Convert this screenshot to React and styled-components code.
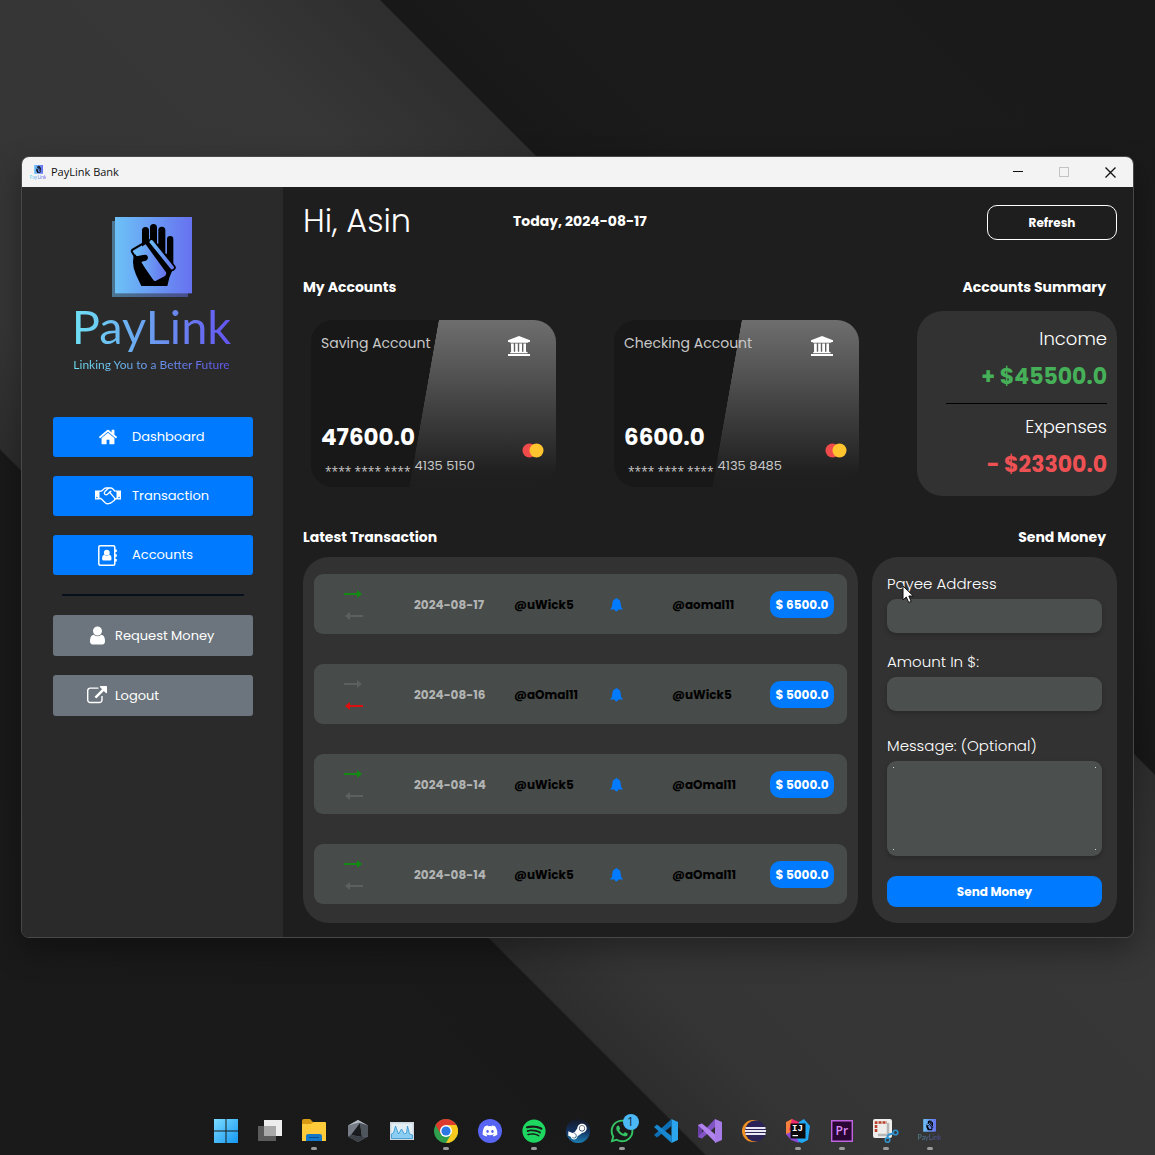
import React from "react";
import styled, { createGlobalStyle, css } from "styled-components";
import { FaDiscord, FaSpotify, FaSteamSymbol, FaWhatsapp } from "react-icons/fa";

const ui = `Poppins, Inter, "Noto Sans", sans-serif`;
const blue = "#007bff";

const GlobalStyle = createGlobalStyle`
  *, *::before, *::after { box-sizing: border-box; }
  body { margin: 0; background: #1a1a1a; font-family: ${ui}; color: #fff; }
  button, input, textarea { font: inherit; color: inherit; }
  h1, h2, p { margin: 0; }
  svg { display: block; flex: none; }
`;

const Desktop = styled.div`
  min-height: 100vh;
  display: flex;
  flex-direction: column;
  padding: 156px 21px 0;
  background: linear-gradient(
    45deg,
    #1a1a1a 0%,
    #191919 30.5%,
    #2d2d2d 30.6%,
    #353535 36%,
    #373737 58%,
    #2e2e2e 66.4%,
    #181818 66.5%,
    #1b1b1b 74%,
    #1a1a1a 100%
  );
`;

const Window = styled.div`
  display: flex;
  flex-direction: column;
  border: 1px solid #484848;
  border-radius: 8px;
  overflow: hidden;
  box-shadow: 0 12px 30px rgba(0, 0, 0, 0.35);
`;

const TitleBar = styled.div`
  display: flex;
  align-items: center;
  height: 30px;
  padding-left: 8px;
  gap: 5px;
  background: #f3f3f3;
  color: #111;
  font: 11px/16px "Open Sans", sans-serif;
`;

const WindowControls = styled.div`
  display: flex;
  margin-left: auto;
  height: 100%;
`;

const ControlButton = styled.button`
  width: 46px;
  padding: 0;
  border: 0;
  background: none;
  display: grid;
  place-items: center;
`;

const Body = styled.div`
  display: grid;
  grid-template-columns: 261px 1fr;
`;

const Sidebar = styled.aside`
  display: flex;
  flex-direction: column;
  padding: 30px 30px 20px 31px;
  background: #2a2a2a;
`;

const Brand = styled.div`
  display: flex;
  flex-direction: column;
  align-items: center;
  margin-bottom: 42px;
  padding-right: 3px;
`;

const gradientText = css`
  background: linear-gradient(90deg, #6ee2f5, #6b9cf0 50%, #6454f0);
  -webkit-background-clip: text;
  background-clip: text;
  color: transparent;
`;

const BrandName = styled.p`
  ${gradientText}
  font: 47px/58px Lato, sans-serif;
`;

const Tagline = styled.p`
  ${gradientText}
  font: 12px/20px Lato, sans-serif;
`;

const Nav = styled.nav`
  display: flex;
  flex-direction: column;
  gap: 19px;
`;

const NavButton = styled.button`
  display: flex;
  align-items: center;
  height: ${(p) => (p.$muted ? 41 : 40)}px;
  padding: 0 0 0 ${(p) => (p.$muted ? 29 : 40)}px;
  gap: ${(p) => (p.$muted ? 3 : 9)}px;
  border: 0;
  border-radius: 3px;
  background: ${(p) => (p.$muted ? "#6c757d" : blue)};
  font-size: 13px;
  font-weight: 400;
`;

const NavIcon = styled.span`
  width: 30px;
  display: flex;
  justify-content: center;
`;

const Divider = styled.hr`
  width: 182px;
  height: 2px;
  margin: 0 auto;
  border: 0;
  background: #06101c;
`;

const Main = styled.main`
  display: flex;
  flex-direction: column;
  padding: 18px 16px 14px 20px;
  background: #1e1e1e;
`;

const Header = styled.header`
  display: grid;
  grid-template-columns: 210px 1fr 130px;
  height: 35px;
  margin-bottom: 35px;
`;

const Greeting = styled.h1`
  font-size: 32px;
  line-height: 32px;
  font-weight: 300;
`;

const Today = styled.p`
  font-size: 14px;
  line-height: 32px;
  font-weight: 700;
`;

const RefreshButton = styled.button`
  height: 35px;
  border: 1px solid #fff;
  border-radius: 10px;
  background: transparent;
  font-size: 12px;
  font-weight: 700;
`;

const TopSection = styled.div`
  display: grid;
  grid-template-columns: 1fr 200px;
  column-gap: 58px;
  margin-bottom: 29px;
`;

const BottomSection = styled.div`
  display: grid;
  grid-template-columns: 1fr 245px;
  column-gap: 14px;
`;

const Column = styled.section`
  display: flex;
  flex-direction: column;
  gap: ${(p) => p.$gap}px;
`;

const SectionTitle = styled.h2`
  font-size: 14px;
  line-height: 24px;
  font-weight: 700;
  text-align: ${(p) => (p.$right ? "right" : "left")};
  padding-right: ${(p) => (p.$right ? 11 : 0)}px;
`;

const Cards = styled.div`
  display: grid;
  grid-template-columns: 1fr 1fr;
  gap: 58px;
  padding: 9px 0 0 8px;
`;

const BankCard = styled.article`
  display: flex;
  flex-direction: column;
  justify-content: space-between;
  height: 167px;
  padding: 12px 12px 11px 10px;
  border-radius: 22px;
  background: linear-gradient(100deg, #181818 46.5%, transparent 46.7%),
    linear-gradient(#6e6e6e, #4c4c4c 40%, #1f1f1f 92%, #1e1e1e);
`;

const CardRow = styled.div`
  display: flex;
  justify-content: space-between;
  align-items: ${(p) => (p.$center ? "center" : "flex-start")};
`;

const AccountType = styled.p`
  font-size: 14px;
  line-height: 22px;
  font-weight: 400;
  color: #c8c8c8;
`;

const BankIconBox = styled.span`
  padding: 4px 14px 0 0;
`;

const Balance = styled.p`
  font-size: 23px;
  line-height: 28px;
  font-weight: 700;
  margin-bottom: 5px;
`;

const CardNumber = styled.p`
  display: flex;
  align-items: flex-end;
  gap: 4px;
  padding-left: 4px;
  font-size: 13px;
  line-height: 20px;
  font-weight: 400;
  color: #c8c8c8;
`;

const Mask = styled.span`
  font: 12px/9px "Open Sans", sans-serif;
`;

const SummaryPanel = styled.div`
  display: flex;
  flex-direction: column;
  gap: 11px;
  padding: 16px 10px 16px 29px;
  border-radius: 26px;
  background: #323232;
  text-align: right;
`;

const SummaryLabel = styled.p`
  font-size: 18px;
  line-height: 24px;
  font-weight: 300;
`;

const SummaryAmount = styled.p`
  font-size: 22px;
  line-height: 30px;
  font-weight: 700;
  color: ${(p) => (p.$income ? "#46b058" : "#ee5153")};
`;

const SummaryRule = styled.hr`
  width: 100%;
  height: 1px;
  margin: 0;
  border: 0;
  background: #000;
`;

const TransactionPanel = styled.ul`
  display: flex;
  flex-direction: column;
  gap: 30px;
  margin: 0;
  padding: 17px 11px 19px;
  border-radius: 26px;
  background: #323232;
  list-style: none;
`;

const Transaction = styled.li`
  display: grid;
  grid-template-columns: 70fr 100fr 96fr 62fr 98fr 64px;
  align-items: center;
  height: 60px;
  padding: 1px 13px 0 30px;
  border-radius: 9px;
  background: #474b49;
  font-size: 12px;
  font-weight: 700;
  color: #000;
`;

const Arrows = styled.span`
  display: flex;
  flex-direction: column;
  gap: 14px;
`;

const DateText = styled.time`
  color: #b2b4b3;
`;

const Pill = styled.span`
  height: 27px;
  border-radius: 10px;
  background: ${blue};
  color: #fff;
  line-height: 27px;
  text-align: center;
  white-space: nowrap;
`;

const SendForm = styled.form`
  display: flex;
  flex-direction: column;
  padding: 15px 15px 16px;
  border-radius: 26px;
  background: #323232;
`;

const Field = styled.div`
  position: relative;
  display: flex;
  flex-direction: column;
  gap: 3px;
  margin-bottom: ${(p) => p.$after}px;
`;

const FieldLabel = styled.label`
  font-size: 15px;
  line-height: 24px;
  font-weight: 300;
`;

const fieldBox = css`
  width: 100%;
  border: 0;
  outline: 0;
  border-radius: 9px;
  padding: 6px 10px;
  background-color: #4b4f4d;
  box-shadow: 0 2px 5px rgba(0, 0, 0, 0.22);
  font-size: 13px;
`;

const TextInput = styled.input`
  ${fieldBox}
  height: 34px;
`;

const dot = "linear-gradient(#d8d8d8, #d8d8d8)";

const MessageInput = styled.textarea`
  ${fieldBox}
  display: block;
  height: 95px;
  resize: none;
  background-image: ${dot}, ${dot}, ${dot}, ${dot};
  background-repeat: no-repeat;
  background-size: 1px 1px;
  background-position: left 6px top 6px, right 6px top 6px, left 6px bottom 6px,
    right 6px bottom 6px;
`;

const SendButton = styled.button`
  height: 31px;
  border: 0;
  border-radius: 9px;
  background: ${blue};
  font-size: 12px;
  font-weight: 700;
`;

const Pointer = styled.svg`
  position: absolute;
  left: 15px;
  top: 13px;
`;

const Taskbar = styled.footer`
  display: flex;
  justify-content: center;
  gap: 8px;
  margin-top: auto;
  padding-bottom: 4px;
`;

const TaskButton = styled.button`
  position: relative;
  display: flex;
  flex-direction: column;
  align-items: center;
  gap: 4px;
  width: 36px;
  height: 32px;
  padding: 0;
  border: 0;
  background: none;

  &::after {
    content: "";
    width: 6px;
    height: 3px;
    border-radius: 2px;
    background: ${(p) => (p.$running ? "#9a9a9a" : "transparent")};
  }
`;

const Badge = styled.span`
  position: absolute;
  top: -5px;
  right: 1px;
  width: 16px;
  height: 16px;
  border-radius: 50%;
  background: #4cb8f5;
  color: #10293a;
  font-family: "Open Sans", sans-serif;
  font-size: 12px;
  line-height: 16px;
`;

const DiscordDisc = styled.span`
  display: grid;
  place-items: center;
  width: 24px;
  height: 24px;
  border-radius: 50%;
  background: #5865f2;
  color: #fff;
`;

const SteamDisc = styled(DiscordDisc)`
  background: linear-gradient(#161a28, #12305e 50%, #1b7fb5);
`;

function LogoMark({ size }) {
  const id = React.useId().replace(/[^a-zA-Z0-9]/g, "");
  return (
    <svg width={size} height={size} viewBox="273 201 240 240" aria-hidden="true">
      <defs>
        <linearGradient id={id}>
          <stop offset="0" stopColor="#6cc1f7" />
          <stop offset="1" stopColor="#6772f0" />
        </linearGradient>
      </defs>
      <rect x="273" y="213" width="228" height="228" fill={`url(#${id})`} opacity=".5" />
      <rect x="282" y="201" width="231" height="229" fill={`url(#${id})`} />
      <path d="M363 300V242q0-11 10.500-11t10.500 11v30h3V233q0-11 10.500-11t10.500 11v48h4V241q0-11 10.500-11t10.500 11v70h5V268q0-10 9.500-10t9.500 10v85l-12 30-6 25H361l-16-34q-9-18-9-38l2-20z" />
      <path d="M337 305l37-22 61 84q2 6-3 11l-27 14q-5 2-8-2l-38-55z" fill={`url(#${id})`} />
      <path d="M341 319l-8-13q-2-4 2-7l42-25" fill="none" stroke="#000" strokeWidth="6" />
      <path d="M339 320l27-5q14-4 15 8-1 9-14 11l-6 2 12 22-16 10-18-18z" />
      <path d="M392 264l72 88-15 16z" />
      <path d="M383 278q-1-6 4-9 6-4 10 1l63 78q4 6-1 10-7 6-12 0z" fill={`url(#${id})`} stroke="#000" strokeWidth="5" />
    </svg>
  );
}

const MiniName = styled.span`
  ${gradientText}
  font: 7px/8px Lato, sans-serif;
`;

const MiniBrand = styled.span`
  display: flex;
  flex-direction: column;
  align-items: center;
  gap: 1px;
  height: 24px;

  ${MiniName} {
    opacity: 0.5;
  }
`;

const TitleMark = styled.span`
  width: 16px;
  display: flex;
  flex-direction: column;
  align-items: center;

  ${MiniName} {
    font-size: 5px;
    line-height: 6px;
  }
`;

const HomeIcon = () => (
  <svg width="20" height="20" viewBox="0 0 1792 1792" fill="currentColor">
    <path d="M1472 992v480q0 26-19 45t-45 19h-384v-384h-256v384h-384q-26 0-45-19t-19-45v-480q0-1 .5-3t.5-3l575-474 575 474q1 2 1 6zm223-69l-62 74q-8 9-21 11h-3q-13 0-21-7l-692-577-692 577q-12 8-24 7-13-2-21-11l-62-74q-8-10-7-23.500t11-21.500l719-599q32-26 76-26t76 26l244 204v-195q0-14 9-23t23-9h192q14 0 23 9t9 23v408l219 182q10 8 11 21.500t-7 23.500z" />
  </svg>
);

const HandshakeIcon = () => (
  <svg width="26" height="18" viewBox="0 0 26 18" fill="none" stroke="currentColor" strokeWidth="1.300" strokeLinejoin="round" strokeLinecap="round">
    <path d="M0 3.500h4.500v9H0zM21.500 3.500H26v9h-4.500z" fill="currentColor" stroke="none" />
    <path d="M4.500 4.200h1.800L9.500 1.500q.6-.5 1.500-.5h5q.8 0 1.400.5l2.600 2.700h1.500" />
    <path d="M4.500 11.500h1.400l4.300 4.200q2.200 1.800 4.400.5 1 .3 1.700-.8 1.300 0 1.900-1.400 1.400-.1 1.700-1.600.4-.9 1.600-.9" />
    <path d="M13.500 1.300l-3.600 3.300q-1.300 1.400-.1 2.600 1.400 1.100 2.800 0l2-1.900 4.700 5.300q.8 1 .3 1.900" />
    <path d="M14.600 5.300l1.300-1.100" />
    <path d="M1.800 10.500h.2M24 10.500h.2" stroke={blue} />
  </svg>
);

const AddressBookIcon = () => (
  <svg width="20" height="21" viewBox="0 0 20 21" fill="currentColor">
    <rect x=".8" y=".8" width="16" height="19.400" rx="1.500" fill="none" stroke="currentColor" strokeWidth="1.500" />
    <path d="M17 4.500h1.800v2.600H17zM17 9.200h1.800v2.600H17zM17 13.900h1.800v2.600H17z" />
    <circle cx="8.800" cy="7.700" r="2.900" />
    <path d="M6 9.800q2.800 2.300 5.600 0 1.900.6 1.900 4.200 0 1.600-1.500 1.600H5.600q-1.500 0-1.500-1.600 0-3.600 1.900-4.200z" />
  </svg>
);

const UserIcon = () => (
  <svg width="21" height="21" viewBox="0 0 1792 1792" fill="currentColor">
    <path d="M1536 1399q0 109-62.500 187t-150.500 78h-854q-88 0-150.500-78t-62.500-187q0-85 8.500-160.500t31.500-152 58.500-131 94-89 134.500-34.500q131 128 313 128t313-128q76 0 134.500 34.500t94 89 58.500 131 31.500 152 8.500 160.500zm-256-887q0 159-112.500 271.500t-271.500 112.500-271.500-112.500-112.500-271.500 112.500-271.500 271.500-112.500 271.500 112.500 112.500 271.500z" />
  </svg>
);

const LogoutIcon = () => (
  <svg width="20" height="20" viewBox="0 0 1792 1792" fill="currentColor">
    <path d="M1408 928v320q0 119-84.500 203.500t-203.500 84.500h-832q-119 0-203.500-84.500t-84.500-203.500v-832q0-119 84.500-203.500t203.500-84.500h704q14 0 23 9t9 23v64q0 14-9 23t-23 9h-704q-66 0-113 47t-47 113v832q0 66 47 113t113 47h832q66 0 113-47t47-113v-320q0-14 9-23t23-9h64q14 0 23 9t9 23zm384-864v512q0 26-19 45t-45 19-45-19l-176-176-652 652q-10 10-23 10t-23-10l-114-114q-10-10-10-23t10-23l652-652-176-176q-19-19-19-45t19-45 45-19h512q26 0 45 19t19 45z" />
  </svg>
);

const BankIcon = () => (
  <svg width="22" height="20" viewBox="0 0 22 20" fill="#fff">
    <path d="M11 0l11 4.200V6h-1.500q0 .8-.9.800H2.400q-.9 0-.9-.8H0V4.200zM3 7.500h2.800v8.200h1.400V7.500h2.600v8.200h1.400V7.500H14v8.200h1.400V7.500h2.600v8.200h.7q.9 0 .9.800v.7H2.200v-.7q0-.8.900-.8zM0 18h22v2H0z" />
  </svg>
);

const MastercardIcon = () => (
  <svg width="22" height="17" viewBox="0 0 22 17">
    <circle cx="7.500" cy="9.500" r="7" fill="#f04b4b" />
    <circle cx="14.500" cy="9.500" r="7" fill="#ffc42e" />
  </svg>
);

const BellIcon = () => (
  <svg width="13" height="14" viewBox="0 0 13 14" fill={blue}>
    <path d="M6.500 0q.9 0 1 1 2.900.6 3 3.700 0 4.300 2.500 6.800H8.300q-.2 2-1.800 2t-1.800-2H0q2.500-2.500 2.500-6.800.1-3.100 3-3.700.1-1 1-1z" />
  </svg>
);

const ArrowIcon = ({ color, left }) => (
  <svg width="19" height="8" viewBox="0 0 19 8" fill={color}>
    <path d={left ? "M19 3v2H6v3L1 4l5-4v3z" : "M0 3v2h13v3l5-4-5-4v3z"} />
  </svg>
);

const icons = {
  Start: (
    <svg width="24" height="24" viewBox="0 0 24 24">
      <defs>
        <linearGradient id="start" x2="1" y2="1">
          <stop stopColor="#7bdcff" />
          <stop offset="1" stopColor="#1597f2" />
        </linearGradient>
      </defs>
      <path d="M0 0h11.500v11.500H0zM12.500 0H24v11.500H12.500zM0 12.500h11.500V24H0zM12.500 12.500H24V24H12.500z" fill="url(#start)" />
    </svg>
  ),
  "Task View": (
    <svg width="24" height="24" viewBox="0 0 24 24">
      <path d="M6 1h18v16H6z" fill="#ededed" />
      <path d="M0 7h18v15H0z" fill="#5b5b5b" />
      <path d="M6 7h12v10H6z" fill="#a9a9a9" />
    </svg>
  ),
  "File Explorer": (
    <svg width="26" height="24" viewBox="0 0 26 24">
      <path d="M1 2q0-2 2-2h6l3 3h12v6H1z" fill="#d99a14" />
      <path d="M1 5h9l3-2h11q1 0 1 1v18H1z" fill="#ffcb3a" />
      <path d="M5 22v-5q0-2 2-2h12q2 0 2 2v5z" fill="#1478c8" />
      <path d="M8 18h10v1H8z" fill="#0a4d8f" />
    </svg>
  ),
  Launcher: (
    <svg width="24" height="24" viewBox="0 0 24 24">
      <path d="M12 1l10 5.500v11L12 23 2 17.500v-11z" fill="#757c85" />
      <path d="M12 1l10 5.500-9-3-11 3z" fill="#b6bcc4" />
      <path d="M14 4L5 16l11 2z" fill="#191b1f" />
      <path d="M2 17.500L12 23l10-5.500-6 .5-11-2z" fill="#3c4148" />
      <path d="M14 4l8 2.500v11l-6 .5z" fill="#4f555d" />
    </svg>
  ),
  Monitor: (
    <svg width="24" height="24" viewBox="0 0 24 24">
      <path d="M0 3h24v18H0z" fill="#cfd8df" />
      <path d="M1.500 4.500h21v15h-21z" fill="#e3edf4" />
      <path d="M1.500 19.500V15l2-1 2-7 3 8 3-5 3 5 2-1 1-7 2 8 3 1v3.500z" fill="#8ccdf2" stroke="#2f93cf" strokeWidth=".8" />
    </svg>
  ),
  Chrome: (
    <svg width="24" height="24" viewBox="0 0 24 24">
      <circle cx="12" cy="12" r="12" fill="#2f9e4d" />
      <path d="M1.600 6A12 12 0 0 1 22.400 6H12L6.800 15z" fill="#de3a2d" />
      <path d="M22.400 6A12 12 0 0 1 12 24l5.200-9L12 6z" fill="#fbc91d" />
      <circle cx="12" cy="12" r="6" fill="#fff" />
      <circle cx="12" cy="12" r="4.600" fill="#2b78e4" />
    </svg>
  ),
  Discord: (
    <DiscordDisc>
      <FaDiscord size={16} />
    </DiscordDisc>
  ),
  Spotify: <FaSpotify size={24} color="#1ed760" />,
  Steam: (
    <SteamDisc>
      <FaSteamSymbol size={21} />
    </SteamDisc>
  ),
  WhatsApp: (
    <svg width="26" height="24" viewBox="0 0 26 24">
      <FaWhatsapp size={26} x="0" y="-1" color="#35c463" />
    </svg>
  ),
  "VS Code": (
    <svg width="24" height="24" viewBox="0 0 24 24">
      <path d="M0 16L17.500 0v7L3 18.500z" fill="#0d6fb5" />
      <path d="M0 8l3-2.500L17.500 17v7z" fill="#1787cf" />
      <path d="M17.500 0L24 3v18l-6.500 3z" fill="#2aa5ee" />
    </svg>
  ),
  "Visual Studio": (
    <svg width="24" height="24" viewBox="0 0 24 24">
      <path d="M0 6l4-1.500v15L0 18z" fill="#6a3fa5" />
      <path d="M0 18L17 0v8L4 19.500z" fill="#8253c4" />
      <path d="M0 6l4-1.500L18 16v8z" fill="#b183ee" />
      <path d="M17 0l7 3v18l-7 3z" fill="#a77be6" />
    </svg>
  ),
  Eclipse: (
    <svg width="24" height="24" viewBox="0 0 24 24">
      <circle cx="11" cy="12" r="11" fill="#ef9122" />
      <circle cx="13.500" cy="12" r="10.500" fill="#2b2257" />
      <path d="M3.500 8h20v2h-20zM3 11h21v2H3zM3.500 14h20v2h-20z" fill="#e9e8f2" />
    </svg>
  ),
  "IntelliJ IDEA": (
    <svg width="24" height="24" viewBox="0 0 24 24">
      <path d="M0 3l6-3 6 6-4 16-8-7z" fill="#f7803c" />
      <path d="M6 0l7 3v10L3 11z" fill="#ed2a6b" />
      <path d="M13 3l5-3 6 7-2 14-6 3-9-3z" fill="#22a7f2" />
      <path d="M0 15l8-3 5 12-8-3z" fill="#8a48d8" />
      <path d="M4.500 4.500h15v15h-15z" fill="#0b0b0b" />
      <text x="6" y="12" fontFamily="Liberation Mono, monospace" fontSize="9" fontWeight="700" fill="#fff">IJ</text>
      <path d="M6.500 16h5.500v1.200H6.500z" fill="#fff" />
    </svg>
  ),
  "Premiere Pro": (
    <svg width="24" height="24" viewBox="0 0 24 24">
      <path d="M1.700 1.700h20.600v20.600H1.700z" fill="#2a0634" stroke="#c064e2" strokeWidth="1.400" />
      <text x="5.500" y="16" fontFamily="Open Sans, sans-serif" fontSize="12" fontWeight="600" fill="#dc8cf5">Pr</text>
    </svg>
  ),
  "Snipping Tool": (
    <svg width="26" height="24" viewBox="0 0 26 24">
      <rect x="0" y="0" width="19" height="19" rx="2" fill="#eeeeec" />
      <path d="M3 13V3.500h11" fill="none" stroke="#b8402b" strokeWidth="2.600" strokeDasharray="3 1" />
      <path d="M15 4v12H5" fill="none" stroke="#b7b7b7" strokeWidth="2.500" />
      <path d="M15 16l6-2M15 16l-1 4" stroke="#3294cf" strokeWidth="2" />
      <circle cx="22.500" cy="13.500" r="2.300" fill="none" stroke="#3294cf" strokeWidth="1.600" />
      <circle cx="14.500" cy="21" r="2.300" fill="none" stroke="#3294cf" strokeWidth="1.600" />
    </svg>
  ),
  PayLink: (
    <MiniBrand>
      <LogoMark size={13} />
      <MiniName>PayLink</MiniName>
    </MiniBrand>
  ),
};

const running = ["File Explorer", "Chrome", "Spotify", "WhatsApp", "IntelliJ IDEA", "Premiere Pro", "Snipping Tool", "PayLink"];

const accounts = [
  { type: "Saving Account", balance: "47600.0", digits: "4135 5150" },
  { type: "Checking Account", balance: "6600.0", digits: "4135 8485" },
];

const transactions = [
  { date: "2024-08-17", from: "@uWick5", to: "@aomal11", amount: "6500.0", incoming: true },
  { date: "2024-08-16", from: "@aOmal11", to: "@uWick5", amount: "5000.0", incoming: false },
  { date: "2024-08-14", from: "@uWick5", to: "@aOmal11", amount: "5000.0", incoming: true },
  { date: "2024-08-14", from: "@uWick5", to: "@aOmal11", amount: "5000.0", incoming: true },
];

function NavItem({ icon, muted, children }) {
  return (
    <NavButton type="button" $muted={muted}>
      <NavIcon>{icon}</NavIcon>
      {children}
    </NavButton>
  );
}

export default function App() {
  return (
    <Desktop>
      <GlobalStyle />
      <Window>
        <TitleBar>
          <TitleMark>
            <LogoMark size={9} />
            <MiniName>PayLink</MiniName>
          </TitleMark>
          PayLink Bank
          <WindowControls>
            <ControlButton type="button" aria-label="Minimize">
              <svg width="10" height="10" stroke="#111"><path d="M0 4.500h10" /></svg>
            </ControlButton>
            <ControlButton type="button" aria-label="Maximize" disabled>
              <svg width="10" height="10" stroke="#c4c4c4" fill="none"><rect x=".5" y=".5" width="9" height="9" /></svg>
            </ControlButton>
            <ControlButton type="button" aria-label="Close">
              <svg width="11" height="11" stroke="#111" strokeWidth="1.300"><path d="M.5.500l10 10M10.500.500l-10 10" /></svg>
            </ControlButton>
          </WindowControls>
        </TitleBar>
        <Body>
          <Sidebar>
            <Brand>
              <LogoMark size={80} />
              <BrandName>PayLink</BrandName>
              <Tagline>Linking You to a Better Future</Tagline>
            </Brand>
            <Nav>
              <NavItem icon={<HomeIcon />}>Dashboard</NavItem>
              <NavItem icon={<HandshakeIcon />}>Transaction</NavItem>
              <NavItem icon={<AddressBookIcon />}>Accounts</NavItem>
              <Divider />
              <NavItem muted icon={<UserIcon />}>Request Money</NavItem>
              <NavItem muted icon={<LogoutIcon />}>Logout</NavItem>
            </Nav>
          </Sidebar>
          <Main>
            <Header>
              <Greeting>Hi, Asin</Greeting>
              <Today>Today, 2024-08-17</Today>
              <RefreshButton type="button">Refresh</RefreshButton>
            </Header>
            <TopSection>
              <Column $gap={12}>
                <SectionTitle>My Accounts</SectionTitle>
                <Cards>
                  {accounts.map((a) => (
                    <BankCard key={a.type}>
                      <CardRow>
                        <AccountType>{a.type}</AccountType>
                        <BankIconBox><BankIcon /></BankIconBox>
                      </CardRow>
                      <CardRow $center>
                        <div>
                          <Balance>{a.balance}</Balance>
                          <CardNumber>
                            <Mask>**** **** ****</Mask>
                            {a.digits}
                          </CardNumber>
                        </div>
                        <MastercardIcon />
                      </CardRow>
                    </BankCard>
                  ))}
                </Cards>
              </Column>
              <Column $gap={12}>
                <SectionTitle $right>Accounts Summary</SectionTitle>
                <SummaryPanel>
                  <SummaryLabel>Income</SummaryLabel>
                  <SummaryAmount $income>+ $45500.0</SummaryAmount>
                  <SummaryRule />
                  <SummaryLabel>Expenses</SummaryLabel>
                  <SummaryAmount>- $23300.0</SummaryAmount>
                </SummaryPanel>
              </Column>
            </TopSection>
            <BottomSection>
              <Column $gap={8}>
                <SectionTitle>Latest Transaction</SectionTitle>
                <TransactionPanel>
                  {transactions.map((t, i) => (
                    <Transaction key={i}>
                      <Arrows>
                        <ArrowIcon color={t.incoming ? "#138a13" : "#5d605f"} />
                        <ArrowIcon left color={t.incoming ? "#5d605f" : "#dd0f0f"} />
                      </Arrows>
                      <DateText>{t.date}</DateText>
                      <span>{t.from}</span>
                      <BellIcon />
                      <span>{t.to}</span>
                      <Pill>$ {t.amount}</Pill>
                    </Transaction>
                  ))}
                </TransactionPanel>
              </Column>
              <Column $gap={8}>
                <SectionTitle $right>Send Money</SectionTitle>
                <SendForm onSubmit={(e) => e.preventDefault()}>
                  <Field $after={17}>
                    <FieldLabel htmlFor="payee">Payee Address</FieldLabel>
                    <TextInput id="payee" type="text" />
                    <Pointer width="13" height="19" viewBox="0 0 13 19">
                      <path d="M1 1v14l3.300-3 2.400 5.500 2.500-1.100L6.800 11h4.500z" fill="#fff" stroke="#111" />
                    </Pointer>
                  </Field>
                  <Field $after={23}>
                    <FieldLabel htmlFor="amount">Amount In $:</FieldLabel>
                    <TextInput id="amount" type="text" />
                  </Field>
                  <Field $after={20}>
                    <FieldLabel htmlFor="message">Message: (Optional)</FieldLabel>
                    <MessageInput id="message" />
                  </Field>
                  <SendButton type="submit">Send Money</SendButton>
                </SendForm>
              </Column>
            </BottomSection>
          </Main>
        </Body>
      </Window>
      <Taskbar>
        {Object.entries(icons).map(([name, icon]) => (
          <TaskButton key={name} type="button" aria-label={name} $running={running.includes(name)}>
            {icon}
            {name === "WhatsApp" && <Badge>1</Badge>}
          </TaskButton>
        ))}
      </Taskbar>
    </Desktop>
  );
}
